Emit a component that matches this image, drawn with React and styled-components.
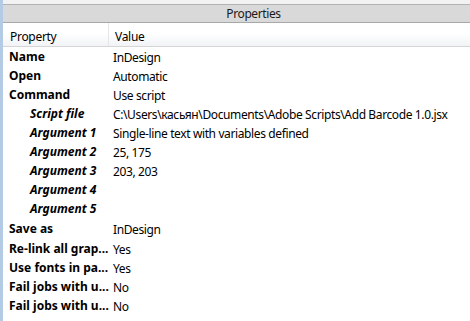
import React from 'react'
import styled, { createGlobalStyle } from 'styled-components'

const GlobalStyle = createGlobalStyle`
    html, body {
        margin: 0;
        padding: 0;
        background: #ffffff;
    }
    body {
        font-family: "Noto Sans", "Open Sans", sans-serif;
        font-size: 12px;
        color: #000;
    }
`

const Panel = styled.div`
    width: 470px;
    height: 321px;
    display: flex;
    flex-direction: column;
    border-left: 3px solid #b4cbe6;
    box-sizing: border-box;
    overflow: hidden;
    background: #fff;
`

const TopStrip = styled.div`
    height: 4px;
    background: #f2f2f2;
    border-bottom: 1px solid #b3b3b3;
`

const TitleBar = styled.div`
    height: 17px;
    background: #d9d9d9;
    border-bottom: 1px solid #a8a8a8;
    display: flex;
    align-items: center;
    justify-content: center;
    padding-left: 34px;
    font-size: 12px;
    letter-spacing: -0.4px;
    color: #1a1a1a;
`

const ColumnHeader = styled.div`
    height: 24px;
    display: grid;
    grid-template-columns: 106px 1fr;
    background: linear-gradient(#ffffff 0%, #ffffff 45%, #f1f3f6 100%);
    border-bottom: 1px solid #d5d5d5;
    box-sizing: border-box;
`

const HeadCell = styled.div`
    display: flex;
    align-items: center;
    padding-left: ${p => p.$pad}px;
    padding-top: 4px;
    border-right: ${p => (p.$divider ? '1px solid #e6e6e6' : 'none')};
    font-size: 12px;
    letter-spacing: -0.3px;
`

const Rows = styled.div`
    display: flex;
    flex-direction: column;
    padding-top: 1px;
`

const Row = styled.div`
    height: ${p => p.$h || 19}px;
    display: grid;
    grid-template-columns: 107px 1fr;
    align-items: center;
`

const Label = styled.div`
    font-weight: bold;
    font-style: ${p => (p.$sub ? 'italic' : 'normal')};
    padding-left: ${p => (p.$sub ? 27 : 6)}px;
    white-space: nowrap;
    overflow: hidden;
    font-size: 12px;
    margin-top: -3px;
`

const Value = styled.div`
    padding-left: 3px;
    white-space: nowrap;
    font-size: 12px;
    letter-spacing: -0.38px;
`

const rows = [
    { label: 'Name', value: 'InDesign' },
    { label: 'Open', value: 'Automatic' },
    { label: 'Command', value: 'Use script' },
    { label: 'Script file', value: 'C:\\Users\\касьян\\Documents\\Adobe Scripts\\Add Barcode 1.0.jsx', sub: true },
    { label: 'Argument 1', value: 'Single-line text with variables defined', sub: true },
    { label: 'Argument 2', value: '25, 175', sub: true },
    { label: 'Argument 3', value: '203, 203', sub: true },
    { label: 'Argument 4', value: '', sub: true },
    { label: 'Argument 5', value: '', sub: true },
    { label: 'Save as', value: 'InDesign', h: 21 },
    { label: 'Re-link all grap...', value: 'Yes' },
    { label: 'Use fonts in pa...', value: 'Yes' },
    { label: 'Fail jobs with u...', value: 'No' },
    { label: 'Fail jobs with u...', value: 'No' },
]

export default function App() {
    return (
        <>
            <GlobalStyle />
            <Panel>
                <TopStrip />
                <TitleBar>Properties</TitleBar>
                <ColumnHeader>
                    <HeadCell $pad={7} $divider>Property</HeadCell>
                    <HeadCell $pad={6}>Value</HeadCell>
                </ColumnHeader>
                <Rows>
                    {rows.map((r, i) => (
                        <Row key={i} $h={r.h}>
                            <Label $sub={r.sub}>{r.label}</Label>
                            <Value>{r.value}</Value>
                        </Row>
                    ))}
                </Rows>
            </Panel>
        </>
    )
}
